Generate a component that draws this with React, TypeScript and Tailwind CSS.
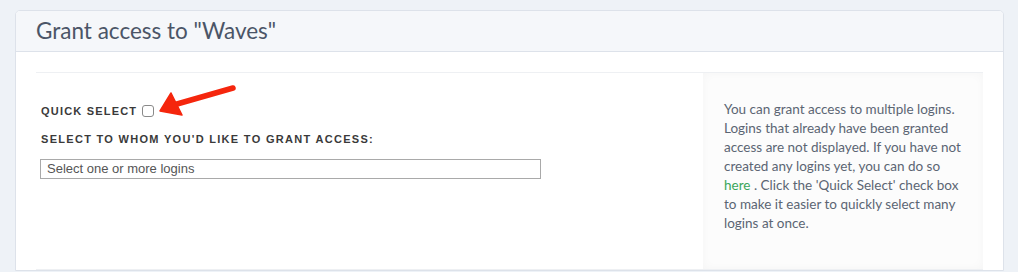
export default function App() {
  return (
    <div className="min-h-[272px] bg-[#eef2f7] pl-[15px] pr-[14px] pt-[10px]">
      <div className="overflow-hidden rounded-t-[5px] border border-[#dde2ea] bg-white">
        <div className="h-[41px] border-b border-[#dde2ea] bg-[#f5f7fa] pl-[20px]">
          <h1 className="pt-[5px] font-['Lato',sans-serif] text-[22.5px] leading-[30px] text-[#4b5567]">
            Grant access to "Waves"
          </h1>
        </div>
        <div className="px-[20px] pt-[20px]">
          <div className="flex border-y border-[#eef0f3]">
            <div className="flex-1 pl-[5px] pt-[31px]">
              <div className="relative flex items-center gap-[5px]">
                <span className="font-['Liberation_Sans',sans-serif] text-[11px] font-bold leading-[14px] tracking-[1.2px] text-[#3a3a3a]">
                  QUICK SELECT
                </span>
                <span className="h-[12px] w-[12px] rounded-[3px] border border-[#8a8a8a] bg-white" />
                <svg className="absolute left-[110px] top-[-22px]" width="90" height="36" viewBox="0 0 90 36">
                  <path d="M82 6 L26 22" stroke="#f5260d" strokeWidth="5.5" strokeLinecap="round" />
                  <path d="M9 29 L20 11 L31 33 Z" fill="#f5260d" stroke="#f5260d" strokeWidth="1.5" strokeLinejoin="round" />
                </svg>
              </div>
              <div className="mt-[14px] font-['Liberation_Sans',sans-serif] text-[11px] font-bold leading-[14px] tracking-[1.3px] text-[#3a3a3a]">
                SELECT TO WHOM YOU'D LIKE TO GRANT ACCESS:
              </div>
              <div className="mt-[13px] h-[20px] w-[501px] -ml-[1px] border border-[#a9a9a9] pl-[6px] font-['Liberation_Sans',sans-serif] text-[13px] leading-[18px] text-[#555]">
                Select one or more logins
              </div>
            </div>
            <div className="h-[196px] w-[280px] bg-[#fcfcfc] pl-[21px] pr-[14px] pt-[27px] shadow-[inset_0_0_10px_rgba(0,0,0,0.03)]">
              <p className="font-['Lato',sans-serif] text-[13.5px] leading-[19px] text-[#5b6573]">
                You can grant access to multiple logins. Logins that already have been granted access are not displayed. If you have not created any logins yet, you can do so{' '}
                <a className="text-[#3aa65a]">here</a> . Click the 'Quick Select' check box to make it easier to quickly select many logins at once.
              </p>
            </div>
          </div>
        </div>
      </div>
    </div>
  );
}
